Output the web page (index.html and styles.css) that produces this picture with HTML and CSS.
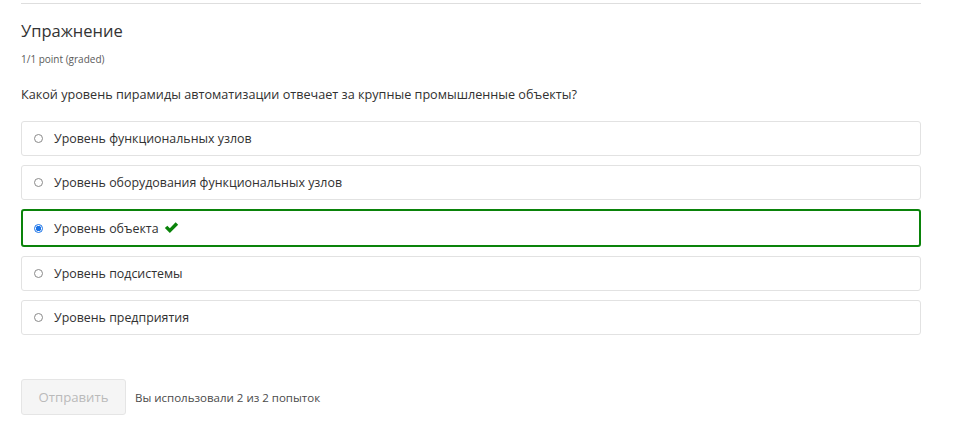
FILE: index.html
```html
<!DOCTYPE html>
<html lang="ru">
<head>
<meta charset="utf-8">
<title>Упражнение</title>
<link rel="stylesheet" href="styles.css">
</head>
<body>
<div class="problem">
  <h2 class="problem-title">Упражнение</h2>
  <div class="problem-progress">1/1 point (graded)</div>
  <p class="question">Какой уровень пирамиды автоматизации отвечает за крупные промышленные объекты?</p>
  <div class="choices">
    <label class="choice"><input type="radio" name="q" class="radio"><span class="choice-text">Уровень функциональных узлов</span></label>
    <label class="choice"><input type="radio" name="q" class="radio"><span class="choice-text">Уровень оборудования функциональных узлов</span></label>
    <label class="choice choice-correct"><input type="radio" name="q" class="radio" checked><span class="choice-text">Уровень объекта</span>
      <svg class="check" viewBox="0 0 16 13" width="15" height="12"><path d="M0.8 6.6 L3.5 4.0 L6.2 6.7 L12.5 0.4 L15.2 3.0 L6.2 12.0 Z" fill="#0a830a"/></svg>
    </label>
    <label class="choice"><input type="radio" name="q" class="radio"><span class="choice-text">Уровень подсистемы</span></label>
    <label class="choice"><input type="radio" name="q" class="radio"><span class="choice-text">Уровень предприятия</span></label>
  </div>
  <div class="actions">
    <button class="submit" disabled>Отправить</button>
    <span class="attempts">Вы использовали 2 из 2 попыток</span>
  </div>
</div>
</body>
</html>
```

FILE: styles.css
```css
html, body {
  margin: 0;
  padding: 0;
  background: #fff;
}
body {
  font-family: "Open Sans", "Noto Sans", sans-serif;
  color: #313131;
}
.problem {
  margin: 3px 0 0 21px;
  width: 900px;
  border-top: 1px solid #dedede;
  padding-top: 15px;
}
.problem-title {
  margin: 0;
  font-size: 16.5px;
  line-height: 24px;
  font-weight: 400;
  color: #333;
}
.problem-progress {
  margin-top: 8px;
  font-size: 10px;
  line-height: 16px;
  color: #5a5a5a;
}
.question {
  margin: 17px 0 0;
  font-size: 12.65px;
  line-height: 20px;
  color: #313131;
}
.choices {
  margin-top: 17px;
  display: flex;
  flex-direction: column;
  gap: 9px;
}
.choice {
  display: flex;
  align-items: center;
  height: 33px;
  border: 1px solid #e2e2e2;
  border-radius: 3px;
  padding: 0 12px;
  font-size: 12.4px;
  color: #313131;
}
.choice-correct {
  height: 34px;
  border: 2px solid #0a830a;
  padding: 0 11px;
}
.radio {
  appearance: none;
  -webkit-appearance: none;
  width: 9px;
  height: 9px;
  margin: 0 11px 0 0;
  border: 1px solid #8a8a8a;
  border-radius: 50%;
  box-sizing: border-box;
  background: #fff;
  flex: none;
}
.radio:checked {
  border-color: #1a73e8;
  background: radial-gradient(circle, #1a73e8 0 2.5px, #fff 3px);
}
.check {
  margin-left: 5px;
  flex: none;
}
.actions {
  margin-top: 44px;
  display: flex;
  align-items: center;
  gap: 9px;
}
.submit {
  font-family: "Open Sans", "Noto Sans", sans-serif;
  font-size: 13.2px;
  width: 105px;
  height: 36px;
  background: #f5f5f5;
  border: 1px solid #e5e5e5;
  border-radius: 3px;
  color: #bababa;
  padding: 0;
}
.attempts {
  font-size: 11.5px;
  color: #4a4a4a;
}
```
